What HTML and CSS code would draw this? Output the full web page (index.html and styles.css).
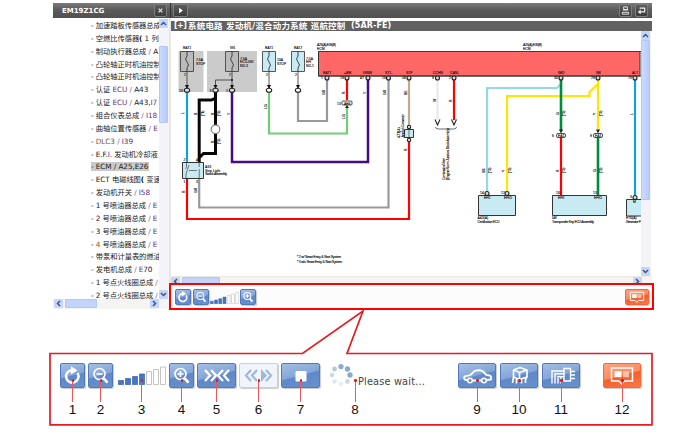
FILE: index.html
```html
<!DOCTYPE html>
<html lang="zh-CN">
<head>
<meta charset="utf-8">
<title>EM19Z1CG</title>
<link rel="stylesheet" href="styles.css">
</head>
<body>
<svg class="defs" width="0" height="0">
  <symbol id="reload" viewBox="0 0 25 25"><path d="M17.6 10.2A6.200 6.200 0 1 1 12 7.200" fill="none" stroke="#fff" stroke-width="2.500"/><path d="M11 3.200l6.500 4.400-6.800 4z" fill="#fff"/></symbol>
  <symbol id="minus" viewBox="0 0 25 25"><circle cx="11.500" cy="11" r="5.500" fill="none" stroke="#fff" stroke-width="1.600"/><path d="M8.500 11h6" stroke="#fff" stroke-width="1.700"/><path d="M15.700 15.400l3.800 4.200" stroke="#fff" stroke-width="2.800"/></symbol>
  <symbol id="plus" viewBox="0 0 25 25"><circle cx="11.500" cy="11" r="5.500" fill="none" stroke="#fff" stroke-width="1.600"/><path d="M8.500 11h6M11.500 8v6" stroke="#fff" stroke-width="1.700"/><path d="M15.700 15.400l3.800 4.200" stroke="#fff" stroke-width="2.800"/></symbol>
  <symbol id="note" viewBox="0 0 38 25"><path d="M8.500 5h21v13h-8l-2.800 3-2.800-3H8.500z" fill="none" stroke="#fff" stroke-width="1.500"/><path d="M11.500 8.200h7v6h-7z" fill="#fff"/><path d="M20 8.200h6v6h-6z" fill="#fbc1aa"/></symbol>
  <symbol id="bars" viewBox="0 0 48 19">
    <g fill="#4776c3" stroke="#2e5daa" stroke-width=".7"><path d="M.5 14.500h5v4h-5zM7.500 12.500h5v6h-5zM14.500 10.500h5v8h-5zM21.500 8h5v10.500h-5z"/></g>
    <g fill="#fdfdfd" stroke="#c4c4c4"><path d="M28.500 5.500h5v13h-5zM35.500 3.500h5v15h-5zM42.500 1h5v17.500h-5z"/></g>
  </symbol>
</svg>
<div class="window">
  <aside class="side">
    <header class="bar"><b class="code">EM19Z1CG</b><span class="key close"><svg viewBox="0 0 12 12"><path d="M4 4l4 4M8 4L4 8" stroke="#eee" stroke-width="1.200"/></svg></span></header>
    <div class="side-body">
      <ul class="list">
        <li>- 加速踏板传感器总成</li>
        <li>- 空燃比传感器<b>(</b> 1 列</li>
        <li>- 制动执行器总成 <i>/</i> A</li>
        <li>- 凸轮轴正时机油控制</li>
        <li>- 凸轮轴正时机油控制</li>
        <li>- 认证 <em>ECU</em> <i>/</i> A43</li>
        <li>- 认证 <em>ECU</em> <i>/</i> A43,<em>I7</em></li>
        <li>- 组合仪表总成 <i>/</i> <em>I18</em></li>
        <li>- 曲轴位置传感器 <i>/</i> <em>E</em></li>
        <li>- <span class="ochre">DLC3</span> <i>/</i> <em>I39</em></li>
        <li>- E.F.<em>I.</em> 发动机冷却液</li>
        <li><span class="picked">- ECM / A25,E26</span></li>
        <li>- ECT 电磁线图<b>(</b> 变速</li>
        <li>- 发动机开关 <i>/</i> <em>I58</em></li>
        <li>- 1 号喷油器总成 <i>/</i> <em>E</em></li>
        <li>- 2 号喷油器总成 <i>/</i> <em>E</em></li>
        <li>- 3 号喷油器总成 <i>/</i> <em>E</em></li>
        <li>- <span class="ochre">4</span> 号喷油器总成 <i>/</i> <em>E</em></li>
        <li>- 带泵和计量表的燃油</li>
        <li>- 发电机总成 <i>/</i> <em>E</em>70</li>
        <li>- 1 号点火线圈总成 <i>/</i></li>
        <li>- 2 号点火线圈总成 <i>/</i></li>
      </ul>
      <div class="vscroll"><span class="arrow"><svg viewBox="0 0 9 9"><path d="M2 6l2.500-2.500L7 6"/></svg></span><span class="thumb side-thumb"></span><span class="arrow end"><svg viewBox="0 0 9 9"><path d="M2 3l2.500 2.500L7 3"/></svg></span></div>
    </div>
    <div class="hscroll"><span class="arrow"><svg viewBox="0 0 9 9"><path d="M6 2L3.500 4.500 6 7"/></svg></span><span class="thumb"></span><span class="arrow end"><svg viewBox="0 0 9 9"><path d="M3 2l2.500 2.500L3 7"/></svg></span></div>
  </aside>
  <main class="main">
    <header class="bar"><span class="key play"><svg viewBox="0 0 14 12"><path d="M5.500 3v6.200L9.500 6z" fill="#fff"/></svg></span>
      <span class="key print"><svg viewBox="0 0 12 12"><path d="M4 2h4v3H4zM3 5.500h6M2.500 8h7v2h-7z" fill="none" stroke="#eee"/></svg></span>
      <span class="key back"><svg viewBox="0 0 12 12"><path d="M4 3.500h5.500v4H4.500" fill="none" stroke="#eee" stroke-width="1.300"/><path d="M5.200 5v5L2 7.500z" fill="#eee"/></svg></span></header>
    <h1 class="title"><span class="fold">[+]</span><span class="system">系统电路 发动机/混合动力系统 巡航控制</span><span class="model">(5AR-FE)</span></h1>
    <div class="view">
      <svg class="diagram" viewBox="171 31 470 245" width="470" height="245">
        <g fill="#cbcbcb"><path d="M178.500 51h25v41h-25zM207 51h50v41h-50z"/></g>
        <g stroke="#444" stroke-width=".9" fill="none">
          <path fill="#bbb" d="M180.500 51.500h13v20h-13zM225.500 51.500h13v20h-13z"/>
          <path fill="#c8eaf2" d="M262.500 51.500h13v20h-13zM291.500 51.500h13v20h-13z"/>
          <path d="M187 72v17M232 72v17M269 72v17M298 72v17M232 80h-16.500v9"/>
          <path stroke="#333" d="M187 51v5q-3 3 0 6t0 6v4M232 51v5q-3 3 0 6t0 6v4M269 51v5q-3 3 0 6t0 6v4M298 51v5q-3 3 0 6t0 6v4"/>
        </g>
        <g fill="#111"><path d="M185 85h4l-2 4zM213.500 85h4l-2 4zM230 85h4l-2 4zM267 85h4l-2 4zM296 85h4l-2 4z"/><circle cx="232" cy="80" r="1"/></g>
        <g fill="none" stroke-width="2.200">
          <path stroke="#11a4cb" d="M187 92v71"/>
          <path stroke="#e8eaea" d="M437.500 78v42"/>
          <path stroke="#999" d="M298 92v29h29V78M199.200 179v28.500h189.300V78"/>
          <path stroke="#73cc76" d="M269 92v41.500h78V107"/>
          <path stroke="#4a0a86" stroke-width="2.500" d="M232 92v70h136V78"/>
          <path stroke="#c4a98c" d="M409 78v48"/>
          <path stroke="#f00" d="M187 179v40h222v-77M347 78v22M454 78v42M561 137v58"/>
          <path stroke="#91d8e8" d="M561 84l-4 4h-70v106"/>
          <path stroke="#ffe500" d="M598 78v6l-8.500 8v4H507v97M598 84v47"/>
          <path stroke="#008c3a" stroke-width="2.600" d="M561 78v53M598 137v58"/>
          <path stroke="#11a4cb" d="M635 78v120"/>
          <path stroke="#080808" stroke-width="3" d="M215.500 92v6l-4 2h-12.300v62M215.500 98v55.500h-12l-4 4"/>
        </g>
        <g stroke="#333" fill="#c8eaf2">
          <path d="M182.500 162.500h21v16h-21zM404.500 129.500h9v8h-9zM478.500 195.500h37v20h-37zM552.500 195.500h54v20h-54zM645 199.500h-18.500v16.500H645"/>
          <path fill="#f66" d="M318.500 51.500h321.500v24.500H318.500z"/>
        </g>
        <path d="M318 51.500h323M318 76h323" stroke="#36413c" stroke-width="1"/>
        <path d="M186.500 163v4l-1 2M189 165l-3 9v4M199.200 163v4M199.200 169v9M189 170.500h8M409 130v7" fill="none" stroke="#444" stroke-width=".7"/>
        <g fill="#ddd" stroke="#222" stroke-width="1.100">
          <ellipse cx="187" cy="90.300" rx="2.700" ry="2"/><ellipse cx="215.500" cy="90.300" rx="2.700" ry="2"/><ellipse cx="232" cy="90.300" rx="2.700" ry="2"/><ellipse cx="269" cy="90.300" rx="2.700" ry="2" fill="#fff"/><ellipse cx="298" cy="90.300" rx="2.700" ry="2" fill="#fff"/>
          <circle cx="215.500" cy="129.300" r="4.300" fill="#fff" stroke="#777"/>
          <circle cx="327" cy="78" r="2"/><circle cx="347" cy="78" r="2"/><circle cx="368" cy="78" r="2"/><circle cx="388.500" cy="78" r="2"/><circle cx="409" cy="78" r="2"/><circle cx="437.500" cy="78" r="2"/><circle cx="454" cy="78" r="2"/><circle cx="561" cy="78" r="2"/><circle cx="598" cy="78" r="2"/><circle cx="635" cy="78" r="2"/>
          <circle cx="409" cy="127" r="1.700"/><circle cx="409" cy="140" r="1.700"/><circle cx="487" cy="193.500" r="2"/><circle cx="507" cy="193.500" r="2"/><circle cx="635" cy="197.500" r="2"/>
          <g fill="#fff" stroke-width=".8"><rect x="342" y="101" width="10" height="4" rx="1"/><rect x="556.500" y="133.500" width="9" height="4" rx="1.500"/><rect x="593.500" y="133.500" width="9" height="4" rx="1.500"/></g>
        </g>
        <path d="M345 108l2-3 2 3zM559 129.500h4l-2 4zM596 129.500h4l-2 4z" fill="#222"/>
        <path d="M435 119.500l2.500 5.500 2.500-5.500M451.500 119.500l2.500 5.500 2.500-5.500" fill="none" stroke="#222" stroke-width="1.100"/>
        <path d="M435.500 127q0 2 3 2h15q3 0 3-2" fill="none" stroke="#444" stroke-width=".8"/>
        <g class="tiny">
          <text x="183" y="49">BAT1</text><text x="230" y="49">IG1</text><text x="265" y="49">BAT1</text><text x="294" y="49">BAT2</text>
          <text x="196" y="61">7.5A</text><text x="196" y="64.500">STOP</text><text x="240" y="59.500">7.5A</text><text x="240" y="63">ECU-IG2</text><text x="240" y="66.500">NO.3</text><text x="277" y="61">10A</text><text x="277" y="64.500">STOP</text><text x="306" y="59.500">7.5A</text><text x="306" y="63">EFI</text><text x="306" y="66.500">NO.1</text>
          <text x="184" y="76">2</text><text x="229" y="76">2</text><text x="266" y="76">2</text><text x="295" y="76">2</text>
          <text x="179" y="91.500">10</text><text x="209.500" y="91.500">3</text><text x="226" y="91.500">1</text>
          <text x="317" y="46" textLength="19">A25(A),E26(B)</text><text x="317" y="49.500">ECM</text><text x="523" y="46" textLength="19">A25(A),E26(B)</text><text x="523" y="49.500">ECM</text>
          <text x="323" y="74">BATT</text><text x="344" y="74">+BM</text><text x="363" y="74">IGSW</text><text x="385" y="74">ST1-</text><text x="406" y="74">STP</text><text x="433" y="74">CCHG</text><text x="450" y="74">CANL</text><text x="558" y="74">IMO</text><text x="596" y="74">IMI</text><text x="632" y="74">ALT</text>
          <text x="321" y="79">1</text><text x="340" y="79">19</text><text x="360" y="79">47</text><text x="382" y="79">16</text><text x="402" y="79">36</text><text x="432" y="79">9</text><text x="449" y="79">2</text><text x="554" y="79">30</text><text x="591" y="79">29</text><text x="628" y="79">75</text>
          <text x="337" y="104.500">13</text><text x="344" y="104.500">AE6</text><text x="552" y="137">6</text><text x="558" y="137">EA1</text><text x="590" y="137">9</text><text x="595" y="137">EA1</text>
          <g><text transform="translate(184 114) rotate(-90)">L</text><text transform="translate(197 115) rotate(-90)">B</text><text transform="translate(203.500 116) rotate(-90)">(*1)</text><text transform="translate(213.500 115) rotate(-90)">B</text><text transform="translate(220 116) rotate(-90)">(*2)</text><text transform="translate(213.500 143) rotate(-90)">B</text><text transform="translate(220 144) rotate(-90)">(*2)</text><text transform="translate(230 115) rotate(-90)">V</text><text transform="translate(267 109) rotate(-90)">LG</text><text transform="translate(324.500 95) rotate(-90)">GR</text><text transform="translate(345 94) rotate(-90)">R</text><text transform="translate(345 119) rotate(-90)">LG</text><text transform="translate(365.500 94) rotate(-90)">V</text><text transform="translate(386 95) rotate(-90)">GR</text><text transform="translate(406.500 95) rotate(-90)">BE</text><text transform="translate(435.500 102) rotate(-90)">W</text><text transform="translate(452 102) rotate(-90)">R</text><text transform="translate(406.500 151) rotate(-90)">R</text><text transform="translate(184.500 193) rotate(-90)">R</text><text transform="translate(197 193) rotate(-90)">GR</text><text transform="translate(485 173) rotate(-90)">SB</text><text transform="translate(491 173) rotate(-90)">(*3)</text><text transform="translate(505 172) rotate(-90)">Y</text><text transform="translate(511 173) rotate(-90)">(*3)</text><text transform="translate(558.500 172) rotate(-90)">R</text><text transform="translate(565 173) rotate(-90)">(*3)</text><text transform="translate(595.500 172) rotate(-90)">G</text><text transform="translate(602 173) rotate(-90)">(*3)</text><text transform="translate(558.500 115) rotate(-90)">G</text><text transform="translate(565 116) rotate(-90)">(*3)</text><text transform="translate(595.500 115) rotate(-90)">Y</text><text transform="translate(602 116) rotate(-90)">(*3)</text><text transform="translate(633 115) rotate(-90)">L</text></g>
          <text transform="translate(400 138) rotate(-90)">A71(A)</text><text transform="translate(403.500 138) rotate(-90)" textLength="24">Junction Connector</text>
          <text transform="translate(445 180) rotate(-90)" textLength="22">Combination Meter</text><text transform="translate(448.700 180) rotate(-90)" textLength="52">(Engine Room Junction Block Assembly)</text>
          <text x="183.500" y="160.500">2</text><text x="196" y="160.500">4</text><text x="183.500" y="183">1</text><text x="196" y="183">3</text>
          <text x="205" y="168">A33</text><text x="205" y="171.500">Stop Light</text><text x="205" y="175" textLength="22">Switch Assembly</text>
          <text x="480" y="194">14</text><text x="501" y="194">12</text><text x="556" y="194">10</text><text x="593" y="194">13</text><text x="630" y="198">3</text>
          <text x="484" y="199">EFII</text><text x="504" y="199">EFIO</text><text x="558" y="199">EFII</text><text x="594" y="199">EFIO</text><text x="633" y="203">M</text>
          <text x="477.500" y="219.300">A43(A)</text><text x="477.500" y="223.300" textLength="22">Certification ECU</text><text x="552" y="219.300">I48</text><text x="552" y="223.300" textLength="42">Transponder Key ECU Assembly</text><text x="626" y="219.300">E70(A)</text><text x="626" y="223.300" textLength="15">Generator P</text>
          <text x="297" y="258" textLength="44">* 2 w/ Smart Entry &amp; Start System</text><text x="297" y="262.500" textLength="45">* 3 w/o Smart Entry &amp; Start System</text>
        </g>
      </svg>
      <div class="vscroll"><span class="arrow"><svg viewBox="0 0 9 9"><path d="M2 6l2.500-2.500L7 6"/></svg></span><span class="thumb main-thumb"></span><span class="arrow end"><svg viewBox="0 0 9 9"><path d="M2 3l2.500 2.500L7 3"/></svg></span></div>
    </div>
    <div class="hscroll wide"><span class="arrow"><svg viewBox="0 0 9 9"><path d="M6 2L3.500 4.500 6 7"/></svg></span><span class="thumb"></span><span class="arrow end"><svg viewBox="0 0 9 9"><path d="M3 2l2.500 2.500L3 7"/></svg></span></div>
    <div class="strip">
      <span class="btn small"><svg viewBox="0 0 25 25"><use href="#reload"/></svg></span>
      <span class="btn small"><svg viewBox="0 0 25 25"><use href="#minus"/></svg></span>
      <svg class="mini-bars" viewBox="0 0 48 19" preserveAspectRatio="none"><use href="#bars"/></svg>
      <span class="btn small"><svg viewBox="0 0 25 25"><use href="#plus"/></svg></span>
      <span class="btn small orange"><svg viewBox="0 0 38 25"><use href="#note"/></svg></span>
    </div>
  </main>
</div>
<section class="panel">
  <div class="tool t1"><span class="btn"><svg viewBox="0 0 25 25"><use href="#reload"/></svg></span><span class="num">1</span></div>
  <div class="tool t2"><span class="btn"><svg viewBox="0 0 25 25"><use href="#minus"/></svg></span><span class="num">2</span></div>
  <div class="tool t3"><svg class="bars" viewBox="0 0 48 19"><use href="#bars"/></svg><span class="num">3</span></div>
  <div class="tool t4"><span class="btn"><svg viewBox="0 0 25 25"><use href="#plus"/></svg></span><span class="num">4</span></div>
  <div class="tool t5"><span class="btn"><svg viewBox="0 0 39 25"><path d="M8 7l5 5.500-5 5.500M14 7l5 5.500-5 5.500M26 7l-5 5.500 5 5.500M32 7l-5 5.500 5 5.500" fill="none" stroke="#fff" stroke-width="2.300"/></svg></span><span class="num">5</span></div>
  <div class="tool t6"><span class="btn off"><svg viewBox="0 0 39 25"><path d="M12 7l-5 5.500 5 5.500M18 7l-5 5.500 5 5.500M27 7l5 5.500-5 5.500" fill="none" stroke="#9db8df" stroke-width="2.200"/><path d="M22 6v13l6-6.500z" fill="#9db8df"/></svg></span><span class="num">6</span></div>
  <div class="tool t7"><span class="btn"><svg viewBox="0 0 39 25"><rect x="14.500" y="8" width="11" height="10.500" rx="1" fill="#fff"/></svg></span><span class="num">7</span></div>
  <div class="tool t8"><span class="wait"><svg viewBox="0 0 26 26"><g fill="#8da9cb"><circle cx="13" cy="3.500" r="2.600"/><circle cx="19.500" cy="6" r="2.700"/><circle cx="22" cy="12" r="2.700"/><circle cx="19.500" cy="18.500" r="2.400" opacity=".45"/><circle cx="13" cy="21" r="2.300" opacity=".2"/><circle cx="6.500" cy="18.500" r="2.300" opacity=".28"/><circle cx="4" cy="12" r="2.300" opacity=".45"/><circle cx="6.500" cy="6" r="2.400" opacity=".65"/></g></svg><span class="msg">Please wait...</span></span><span class="num">8</span></div>
  <div class="tool t9"><span class="btn"><svg viewBox="0 0 38 25"><path d="M9.500 17H7.500q-2-1-1-3.500l6-1.500 4-4q4-1.500 8 0l4 4q4 0 4.500 2v2.500l-4 .5M14.500 17.500h9" fill="none" stroke="#fff" stroke-width="1.800"/><circle cx="12" cy="17.500" r="2.300" fill="none" stroke="#fff" stroke-width="1.500"/><circle cx="26" cy="17.500" r="2.300" fill="none" stroke="#fff" stroke-width="1.500"/></svg></span><span class="num">9</span></div>
  <div class="tool t10"><span class="btn"><svg viewBox="0 0 38 25"><path d="M13.500 7l6.500-2.500L27 7v7l-1.500 2.500V20M13.500 7l6 2.500L27 7M19.500 9.500v6M13.500 7v7l6 2.500 7.500-2.500M13.500 14l-1 6M16.500 16v4.500M21.500 16v4.500" fill="none" stroke="#fff" stroke-width="1.600"/></svg></span><span class="num">10</span></div>
  <div class="tool t11"><span class="btn"><svg viewBox="0 0 38 25"><path d="M22 5.500h6.500v12.500H22zM22 8H10v12.500M22 10.800h-9v9.700M22 13.600h-6v6.900M19 13.600v6.900M28.500 8.500H33M28.500 12H33M28.500 15.500H33" fill="none" stroke="#fff" stroke-width="1.400"/></svg></span><span class="num">11</span></div>
  <div class="tool t12"><span class="btn orange"><svg viewBox="0 0 38 25"><use href="#note"/></svg></span><span class="num">12</span></div>
</section>
<svg class="callout" viewBox="0 0 700 435" width="700" height="435"><path d="M302.500 353.500H50v71.300h602V353.500H347L363 311z" fill="none" stroke="#e51c20" stroke-width="1.700"/></svg>
</body>
</html>
```
FILE: styles.css
```css
* { box-sizing: border-box; }
body { margin: 0; width: 700px; height: 435px; overflow: hidden; background: #fff; position: relative; font-family: "DejaVu Sans", "Noto Sans CJK SC", sans-serif; }
svg { display: block; }
.defs { position: absolute; }
.window { display: flex; margin-left: 53px; padding-top: 3px; width: 600px; height: 310px; }
.side { width: 118px; height: 306px; border-right: 2px solid #e9e7df; display: flex; flex-direction: column; background: #fff; }
.bar { height: 15px; flex: none; display: flex; align-items: center; background: linear-gradient(#7b7b7b, #5b5b5b 45%, #505050); }
.side .bar { width: 118px; border-right: 1px solid #333; }
.code { flex: 1; padding-left: 9px; font: bold 7px "DejaVu Sans", sans-serif; color: #fff; }
.key { width: 13px; height: 13px; flex: none; border: 1px solid #7e7e7e; border-radius: 2px; background: linear-gradient(#5d5d5d, #3b3b3b); }
.key svg { width: 100%; height: 100%; }
.close { margin-right: 3px; }
.play { width: 15px; margin: 0 auto 0 2px; }
.print { margin-right: 3px; }
.back { margin-right: 4px; }
.side-body { display: flex; height: 281px; padding-top: 1px; }
.list { flex: 1; min-width: 0; margin: 0; padding: 1px 0 0 38px; list-style: none; overflow: hidden; font-size: 7.300px; letter-spacing: -.08px; line-height: 12.860px; color: #222; white-space: nowrap; }
.list li { height: 12.860px; }
.list i { font-style: normal; color: #8a5a8a; }
.list em { font-style: normal; color: #6c2f72; }
.ochre { color: #7b5b1c; }
.picked { background: #cacaca; display: inline-block; height: 9px; line-height: 9px; padding-right: 1px; }
.vscroll { width: 10px; flex: none; background: #f4f3f8; display: flex; flex-direction: column; }
.arrow { width: 9px; height: 9px; flex: none; border-radius: 1px; background: #c5d5fb; }
.arrow svg { width: 9px; height: 9px; }
.arrow path { fill: none; stroke: #40557c; stroke-width: 1.5; }
.vscroll .end { margin-top: auto; }
.thumb { border-radius: 1px; background: linear-gradient(90deg, #cbdafe, #b8cbf9); border: 1px solid #b3c7f5; }
.side-thumb { height: 77px; margin-top: 18px; width: 9px; }
.main-thumb { height: 160px; width: 9px; }
.hscroll { height: 10px; flex: none; background: #f4f4f2; display: flex; padding-right: 10px; }
.side .hscroll { padding-left: 1px; width: 116px; }
.hscroll .thumb { width: 32px; height: 9px; margin-left: 2px; background: #c3d4fc; }
.hscroll .end { margin-left: auto; }
.main { width: 481px; height: 307px; display: flex; flex-direction: column; }
.title { margin: 3px 0 0; height: 10px; padding-left: 3px; display: flex; align-items: center; background: #616161; color: #fff; font: bold 8.500px/10px "DejaVu Sans", "Noto Sans CJK SC", sans-serif; white-space: nowrap; }
.fold { width: 14px; font-size: 8px; letter-spacing: -.6px; }
.system { width: 163px; letter-spacing: .2px; }
.model { font-size: 8px; letter-spacing: .1px; }
.view { display: flex; height: 245px; }
.diagram { flex: none; }
.tiny text { font-family: "Liberation Sans", sans-serif; font-size: 3.400px; fill: #111; stroke: #111; stroke-width: .12px; }
.hscroll.wide .thumb { width: 38px; }
.hscroll.wide { height: 7px; overflow: hidden; border-top: 1px solid #eceae2; }
.strip { height: 27px; width: 485px; flex: none; margin-left: -2px; border: 2px solid #f00; background: #fcfcfc; display: flex; align-items: center; padding-left: 4px; }
.btn { display: block; width: 100%; height: 25px; border: 1px solid #5279bb; border-radius: 2px; background: linear-gradient(165deg, #a5bfe5 0, #84a5d8 48%, #5e88c8 52%, #6991cf); box-shadow: 1px 1px 1px #c9c9c9; }
.btn svg { width: calc(100% + 2px); height: 25px; margin: -1px; }
.btn.orange { border-color: #f0683c; background: linear-gradient(165deg, #ffa482 0, #fb8a61 48%, #f2602d 52%, #fb7846); }
.btn.off { border-color: #c3d1e9; background: #f0f4fb; }
.btn.small { width: 16px; height: 16px; margin-right: 1.500px; }
.btn.small svg { height: 16px; width: 16px; }
.mini-bars { width: 29px; height: 12px; margin: 2px 1px 0 0; }
.btn.small.orange { width: 24px; margin: 0 3px 0 auto; }
.btn.small.orange svg { width: 24px; }
.panel { display: flex; margin: 43px 0 0 50px; width: 602px; height: 72px; padding: 10px 0 0 10px; }
.tool { position: relative; width: 25px; height: 60px; flex: none; display: flex; flex-direction: column; align-items: center; }
.num { margin-top: auto; height: 20px; font: 13.500px/14px "Liberation Sans", Arial, sans-serif; color: #111; }
.tool::after { content: ""; position: absolute; left: calc(50% - .5px); top: 17px; width: 1.300px; height: 22px; background: #ef5658; }
.tool::before { content: ""; position: absolute; left: calc(50% - 1px); top: 16px; width: 2.500px; height: 2.500px; border-radius: 50%; background: #e3181c; z-index: 1; }
.t2 { margin-left: 3px; }
.t3 { width: 48px; margin-left: 4.500px; }
.bars { width: 48px; height: 19px; margin-top: 3px; }
.t4 { margin-left: 3.500px; }
.t5, .t6, .t7 { width: 39px; margin-left: 3px; }
.t8 { width: 50px; margin-left: 10px; }
.wait { display: flex; width: 50px; height: 25px; }
.wait svg { width: 26px; height: 26px; flex: none; margin-left: -2px; }
.msg { font-size: 9.800px; letter-spacing: .15px; line-height: 12px; margin: 13px 0 0 4px; white-space: nowrap; color: #444; }
.t9 { width: 38px; margin-left: 78px; }
.t10, .t11 { width: 38px; margin-left: 4px; }
.t12 { width: 38px; margin-left: 23px; }
.callout { position: absolute; left: 0; top: 0; pointer-events: none; }
```
